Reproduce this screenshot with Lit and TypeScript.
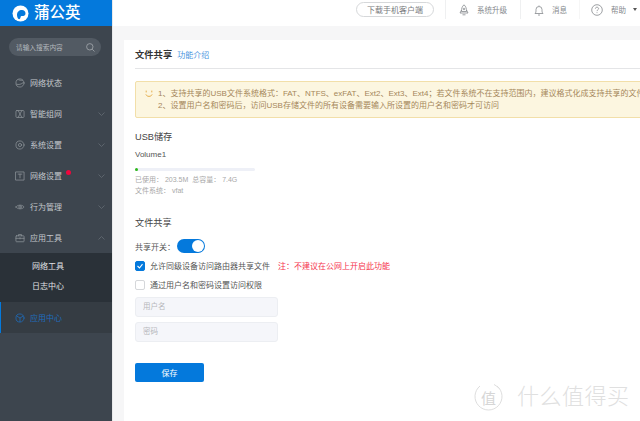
import { LitElement, html, css, svg } from "lit";
import { customElement } from "lit/decorators.js";

const icon = (body: unknown, size = 10) => html`<svg class="ico" width=${size} height=${size} viewBox="0 0 16 16" fill="none" stroke="currentColor" stroke-width="1.2" stroke-linecap="round" stroke-linejoin="round">${body}</svg>`;

const icons: Record<string, unknown> = {
  status: svg`<circle cx="8" cy="8" r="6.5"/><path d="M2.5 10c3 1 8 .5 11-3M6 3c2 1 4 1 6 .5"/>`,
  mesh: svg`<rect x="1.5" y="2.5" width="13" height="11" rx="1.5"/><path d="M5 2.500l6 11M11 2.500l-6 11"/>`,
  system: svg`<circle cx="8" cy="8" r="6.500"/><circle cx="8" cy="8" r="2.500"/>`,
  network: svg`<rect x="1.500" y="1.500" width="13" height="13"/><path d="M5 5h6M8 5v6"/>`,
  behavior: svg`<path d="M1.500 8C4 4 12 4 14.500 8 12 12 4 12 1.500 8z"/><circle cx="8" cy="8" r="2"/>`,
  tools: svg`<rect x="1.500" y="4.500" width="13" height="9.500" rx="1"/><path d="M5.500 4.500V2.500h5v2M1.500 8.500h13M8 7.500v2"/>`,
  center: svg`<circle cx="8" cy="8" r="6.500"/><path d="M3 5l5 3 5-3M8 8v6"/>`,
};

const down = html`<svg class="chev" width="7" height="4" viewBox="0 0 7 4" fill="none" stroke="currentColor" stroke-width=".8"><path d="M.5.5l3 3 3-3"/></svg>`;
const up = html`<svg class="chev" width="7" height="4" viewBox="0 0 7 4" fill="none" stroke="currentColor" stroke-width=".8"><path d="M.5 3.500l3-3 3 3"/></svg>`;

const C = "\uFF1A";
const S = "\uFF1B";
const M = "\uFF0C";

@customElement("app-root")
export class AppRoot extends LitElement {
  static styles = css`
    :host { display: block; width: 640px; height: 421px; overflow: hidden; position: relative;
      font-family: "Liberation Sans", "Noto Sans CJK SC", sans-serif; background: #f6f6f7; }
    * { box-sizing: border-box; }
    .app { display: flex; width: 640px; height: 421px; }
    .side { flex: none; width: 112px; height: 100%; background: #3d454e; display: flex; flex-direction: column; }
    .logo { height: 26px; background: #0479dc; display: flex; align-items: center; gap: 5px; padding: 0 0 0 12px; color: #fff; font-size: 15.5px; font-weight: 500; line-height: 1; }
    .search { margin: 12px 11px 0 9px; height: 18px; border-radius: 9px; background: #525a63; display: flex; align-items: center; justify-content: space-between; padding: 0 6px 0 7px; font-size: 6.700px; color: #b4b9be; }
    .menu { margin-top: 11px; display: flex; flex-direction: column; }
    .row { height: 31px; display: flex; align-items: center; padding-left: 15px; color: #c3c7cb; font-size: 8px; position: relative; }
    .row .ico { flex: none; color: #8e949a; }
    .row .label { margin-left: 5px; }
    .chev { position: absolute; left: 98px; top: 14px; color: #656c74; }
    .dot { position: absolute; left: 66px; top: 10px; width: 5px; height: 5px; border-radius: 50%; background: #f0063c; }
    .sub { background: #2a3138; height: 49px; display: flex; flex-direction: column; padding-top: 4px; }
    .sub div { height: 20px; line-height: 20px; padding-left: 32px; font-size: 8px; color: #e0e3e6; }
    .row.active { background: #353c43; border-left: 1px solid #0479dc; padding-left: 14px; color: #1f6dbd; }
    .row.active .ico { color: #1f6dbd; }
    .main { flex: 1; min-width: 0; display: flex; flex-direction: column; border-left: 1px solid #e8e9ea; }
    .top { flex: none; height: 26px; background: #fff; display: flex; align-items: flex-start; color: #85898d; font-size: 7.500px; padding-left: 243px; }
    .dl { flex: none; width: 78px; height: 15px; margin-top: 2px; border: 1px solid #d6d8da; border-radius: 8px; display: flex; align-items: center; justify-content: center; font-size: 8px; color: #77797c; }
    .tool { flex: none; height: 19px; display: flex; align-items: center; border-left: 1px solid #eff0f1; margin-top: 0; }
    .t1 { margin-left: 11px; width: 75px; padding-left: 13px; gap: 8px; }
    .t2 { width: 59px; padding-left: 13px; gap: 8px; }
    .t3 { width: 61px; padding-left: 11px; gap: 8px; border-left: 1px solid #f6f6f6; }
    .caret { margin-left: -1px; font-size: 0; width: 0; height: 0; border-left: 2.500px solid transparent; border-right: 2.500px solid transparent; border-top: 3px solid #555; }
    .content { flex: 1; min-height: 0; padding: 14px 0 0 11px; overflow: hidden; }
    .card { width: 560px; height: 400px; background: #fff; padding: 0 0 0 11px; color: #555; }
    .title { height: 28.500px; display: flex; align-items: center; gap: 5px; border-bottom: 1px solid #e4e5e7; font-size: 9.300px; font-weight: 700; color: #333; padding-top: 1px; }
    .title a { font-size: 8px; font-weight: 400; color: #4a95e0; }
    .alert { margin-top: 12px; height: 37px; background: #fcf6e0; border: 1px solid #f2dfa9; border-radius: 2px; padding: 6px 0 0 9px; display: flex; font-size: 8px; line-height: 12.500px; color: #a5865a; white-space: nowrap; }
    .alert svg { flex: none; margin: 2px 3px 0 0; }
    .alert .t { padding-left: 2px; }
    h3 { margin: 0; font-weight: 400; font-size: 9.200px; color: #444; line-height: 12px; }
    .usb { margin-top: 13.500px; }
    .vol { margin-top: 5.500px; font-size: 8px; line-height: 12px; color: #555; }
    .bar { margin-top: 7px; width: 120px; height: 3px; background: #eef0f7; border-radius: 2px; position: relative; }
    .fill { width: 3px; height: 3px; background: #2cb81a; border-radius: 2px; }
    .info { margin-top: 3px; font-size: 7px; line-height: 11px; color: #a8a8a8; }
    .share { margin-top: 21px; }
    .sw { display: flex; align-items: center; margin-top: 10px; height: 15px; font-size: 8px; gap: 2px; }
    .toggle { width: 28px; height: 14px; border-radius: 7px; background: #0479dc; display: flex; justify-content: flex-end; padding: 1px; }
    .toggle i { display: block; width: 12px; height: 12px; background: #fff; border-radius: 50%; }
    .chk { display: flex; align-items: center; height: 12px; font-size: 8px; gap: 5px; }
    .chk.one { margin-top: 6px; }
    .chk.two { margin-top: 7px; }
    .box { flex: none; width: 10px; height: 10px; border: 1px solid #d5d7da; border-radius: 2px; background: #fff; display: flex; align-items: center; justify-content: center; }
    .box.on { background: #0479dc; border-color: #0479dc; }
    .warn { color: #f5334d; margin-left: 3px; }
    input { display: block; width: 143px; height: 20px; border: 1px solid #eceef2; border-radius: 3px; background: #f5f6fa; padding: 0 7px; font: inherit; font-size: 7.500px; outline: none; }
    input::placeholder { color: #b5b7bb; opacity: 1; }
    .in1 { margin-top: 6px; }
    .in2 { margin-top: 5px; }
    .save { display: block; margin-top: 21px; width: 69px; height: 19px; border: 0; border-radius: 2px; background: #0479dc; color: #fff; font: inherit; font-size: 8px; padding: 0; }
    .mark { position: absolute; left: 474px; top: 382px; display: flex; align-items: center; gap: 14px; color: #e0e0e0; pointer-events: none; }
    .mark .seal { position: relative; width: 29px; height: 30px; display: flex; align-items: center; justify-content: center; font-size: 15px; color: #d6d6d6; }
    .mark .seal svg { position: absolute; inset: 0; }
    .mark .name { font-size: 22px; font-weight: 300; line-height: 30px; letter-spacing: .5px; }
  `;

  private row(key: string, label: string, opts: { chev?: unknown; dot?: boolean } = {}) {
    return html`<div class="row">${icon(icons[key])}<span class="label">${label}</span>${opts.dot ? html`<span class="dot"></span>` : ""}${opts.chev ?? ""}</div>`;
  }

  render() {
    return html`
      <div class="app">
        <aside class="side">
          <div class="logo">
            <svg width="17" height="17" viewBox="0 0 17 17"><circle cx="8.500" cy="8.500" r="8" fill="#fff"/><path d="M5 10c0-3 2-5 5-5 2 0 3.500 1.500 3.500 3.500S12 11 10 11c-1 0-1.500.5-1.500 1.500 0 1-1 2-2 1.500C5.500 13 5 11.500 5 10z" fill="#0479dc"/></svg>
            <span>蒲公英</span>
          </div>
          <div class="search">
            <span>请输入搜索内容</span>
            <svg width="9" height="9" viewBox="0 0 9 9" fill="none" stroke="#a5aaaf" stroke-width=".8"><circle cx="3.800" cy="3.800" r="3.200"/><path d="M6.200 6.200l2.300 2.300"/></svg>
          </div>
          <nav class="menu">
            ${this.row("status", "网络状态")}
            ${this.row("mesh", "智能组网", { chev: down })}
            ${this.row("system", "系统设置", { chev: down })}
            ${this.row("network", "网络设置", { chev: down, dot: true })}
            ${this.row("behavior", "行为管理", { chev: down })}
            ${this.row("tools", "应用工具", { chev: up })}
            <div class="sub"><div>网络工具</div><div>日志中心</div></div>
            <div class="row active">${icon(icons.center)}<span class="label">应用中心</span></div>
          </nav>
        </aside>
        <div class="main">
          <header class="top">
            <div class="dl">下载手机客户端</div>
            <div class="tool t1">
              <svg width="10" height="12" viewBox="0 0 10 12" fill="none" stroke="#85898d" stroke-width=".8"><path d="M5 .8C3 2.500 2.500 4.500 2.500 7.500h5C7.500 4.500 7 2.500 5 .8zM2.500 6L1 9h8L7.500 6M3.500 10.800h3"/><circle cx="5" cy="5" r=".8"/></svg>
              <span>系统升级</span>
            </div>
            <div class="tool t2">
              <svg width="10" height="12" viewBox="0 0 10 12" fill="none" stroke="#85898d" stroke-width=".8"><path d="M1 9.500c1-1 1-2 1-4a3 3 0 016 0c0 2 0 3 1 4zM4 11h2M5 1.500V1"/></svg>
              <span>消息</span>
            </div>
            <div class="tool t3">
              <svg width="12" height="12" viewBox="0 0 12 12" fill="none" stroke="#85898d" stroke-width=".8"><circle cx="6" cy="6" r="5.300"/><path d="M4.400 4.700C4.400 3.700 5.100 3.200 6 3.200s1.600.6 1.600 1.400c0 1.200-1.600 1.300-1.600 2.500M6 8.300v.8"/></svg>
              <span>帮助</span>
              <span class="caret"></span>
            </div>
          </header>
          <div class="content">
            <section class="card">
              <div class="title"><span>文件共享</span><a>功能介绍</a></div>
              <div class="alert">
                <svg width="8" height="8" viewBox="0 0 8 8" fill="none" stroke="#e5ae4c" stroke-width="1" stroke-linecap="round"><path d="M1.200 1v1M6.800 1v1M1 4.800c1 2.200 5 2.200 6 0"/></svg>
                <div class="t">1、支持共享的USB文件系统格式${C}FAT、NTFS、exFAT、Ext2、Ext3、Ext4${S}若文件系统不在支持范围内${M}建议格式化成支持共享的文件系统<br />2、设置用户名和密码后${M}访问USB存储文件的所有设备需要输入所设置的用户名和密码才可访问</div>
              </div>
              <h3 class="usb">USB储存</h3>
              <div class="vol">Volume1</div>
              <div class="bar"><div class="fill"></div></div>
              <div class="info">已使用${C}&nbsp;203.5M &nbsp;总容量${C}&nbsp;7.4G<br />文件系统${C}&nbsp;vfat</div>
              <h3 class="share">文件共享</h3>
              <div class="sw"><span>共享开关${C}</span><span class="toggle"><i></i></span></div>
              <div class="chk one">
                <span class="box on"><svg width="8" height="8" viewBox="0 0 8 8" fill="none" stroke="#fff" stroke-width="1.100"><path d="M1.500 4l2 2 3-3.800"/></svg></span>
                <span>允许同级设备访问路由器共享文件</span><span class="warn">注${C}不建议在公网上开启此功能</span>
              </div>
              <div class="chk two"><span class="box"></span><span>通过用户名和密码设置访问权限</span></div>
              <input class="in1" placeholder="用户名" />
              <input class="in2" type="password" placeholder="密码" />
              <button class="save">保存</button>
            </section>
          </div>
        </div>
      </div>
      <div class="mark">
        <div class="seal">
          <svg width="29" height="30" viewBox="0 0 29 30" fill="none" stroke="#dedede" stroke-width="1"><path d="M6 4a13.500 13.500 0 1 0 17 0M20 2.500a13 13 0 0 1 5 4"/></svg>
          <span>值</span>
        </div>
        <div class="name">什么值得买</div>
      </div>
    `;
  }
}
